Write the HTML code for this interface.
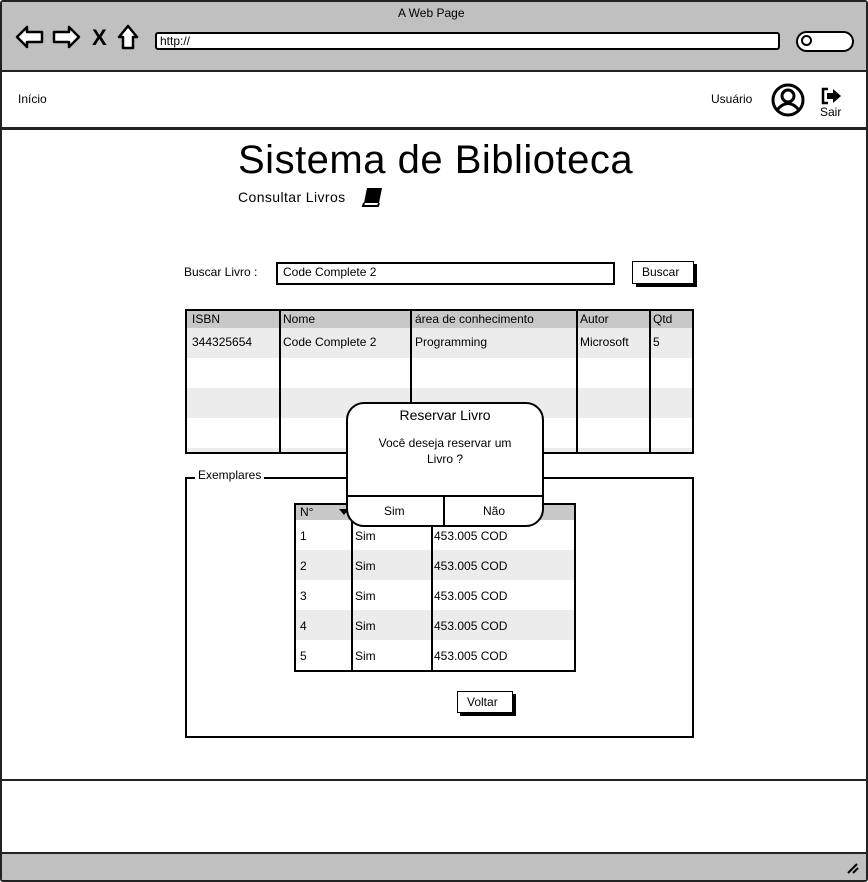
<!DOCTYPE html>
<html><head><meta charset="utf-8"><style>
*{box-sizing:border-box;margin:0;padding:0}
body{width:868px;height:882px;background:#fff;font-family:"Liberation Sans",sans-serif;font-size:13px;color:#000;position:relative;overflow:hidden}
.a{position:absolute}
.t{position:absolute;white-space:nowrap}
.row{position:absolute;left:0;right:0}
</style></head><body>
<div class="a" style="left:0;top:0;width:868px;height:882px;border:2px solid #222;border-radius:3px"></div>
<div class="a" style="left:2px;top:2px;width:864px;height:68px;background:#c0c0c0"></div>
<div class="t" style="left:398px;top:6px;font-size:12px">A Web Page</div>
<svg class="a" style="left:14px;top:22px" width="130" height="30" viewBox="0 0 130 30">
<g fill="#fff" stroke="#000" stroke-width="2.5" stroke-linejoin="round">
<path d="M3 15 L13 5 L13 10 L28 10 L28 20 L13 20 L13 25 Z"/>
<path d="M65 15 L55 5 L55 10 L40 10 L40 20 L55 20 L55 25 Z"/>
<path d="M105 15 L114 4 L123 15 L119 15 L119 26 L109 26 L109 15 Z"/>
</g>
<text x="78" y="23" font-family="Liberation Sans" font-weight="bold" font-size="22">X</text>
</svg>
<div class="a" style="left:155px;top:32px;width:625px;height:18px;background:#fff;border:2px solid #000;border-radius:3px"></div>
<div class="t" style="left:160px;top:34px;font-size:12px">http://</div>
<div class="a" style="left:796px;top:31px;width:58px;height:21px;background:#fff;border:2.5px solid #000;border-radius:11px"></div>
<div class="a" style="left:801px;top:35px;width:11px;height:11px;border:2.5px solid #000;border-radius:50%"></div>
<div class="a" style="left:0;top:70px;width:868px;height:2px;background:#222"></div>
<div class="a" style="left:0;top:127px;width:868px;height:3px;background:#222"></div>
<div class="t" style="left:18px;top:92px;font-size:12px">Início</div>
<div class="t" style="left:711px;top:92px;font-size:12px">Usuário</div>
<svg class="a" style="left:771px;top:83px" width="34" height="34" viewBox="0 0 34 34">
<circle cx="17" cy="17" r="15" fill="#fff" stroke="#000" stroke-width="3"/>
<circle cx="17" cy="13" r="6" fill="#fff" stroke="#000" stroke-width="3"/>
<path d="M6 27 Q17 14 28 27" fill="#fff" stroke="#000" stroke-width="3"/>
</svg>
<svg class="a" style="left:820px;top:86px" width="24" height="20" viewBox="0 0 24 20">
<path d="M8 3 H3 V17 H8" fill="none" stroke="#000" stroke-width="2.5"/>
<path d="M7 7 H13 V3 L21 10 L13 17 V13 H7 Z" fill="#000"/>
</svg>
<div class="t" style="left:820px;top:105px;font-size:12px">Sair</div>

<div class="t" style="left:238px;top:138px;font-size:40px;letter-spacing:0.5px">Sistema de Biblioteca</div>
<div class="t" style="left:238px;top:189px;font-size:14px;letter-spacing:0.4px">Consultar Livros</div>
<svg class="a" style="left:361px;top:186px" width="24" height="22" viewBox="0 0 24 22">
<path d="M6 2 H21 L18 17 H3 Z" fill="#000"/><path d="M3 17 L2 20 H17 L18 17" fill="#fff" stroke="#000" stroke-width="2"/>
</svg>

<div class="t" style="left:184px;top:265px;font-size:12px">Buscar Livro :</div>
<div class="a" style="left:276px;top:262px;width:339px;height:23px;border:2px solid #000;background:#fff"></div>
<div class="t" style="left:283px;top:265px;font-size:12px">Code Complete 2</div>
<div class="a" style="left:636px;top:264px;width:61px;height:23px;background:#000"></div>
<div class="a" style="left:632px;top:261px;width:62px;height:23px;border:1.5px solid #000;background:#fff"></div>
<div class="t" style="left:642px;top:265px;font-size:12px">Buscar</div>

<div class="a" style="left:185px;top:309px;width:509px;height:145px;border:2px solid #000;overflow:hidden;background:#fff">
<div class="row" style="top:0;height:17px;background:#c8c8c8"></div>
<div class="row" style="top:17px;height:30px;background:#ececec"></div>
<div class="row" style="top:77px;height:30px;background:#ececec"></div>
<div class="row" style="top:137px;height:30px;background:#ececec"></div>
<div class="a" style="left:92px;top:0;width:2px;height:145px;background:#000"></div>
<div class="a" style="left:223px;top:0;width:2px;height:145px;background:#000"></div>
<div class="a" style="left:389px;top:0;width:2px;height:145px;background:#000"></div>
<div class="a" style="left:462px;top:0;width:2px;height:145px;background:#000"></div>
<div class="t" style="left:5px;top:1px;font-size:12px">ISBN</div>
<div class="t" style="left:96px;top:1px;font-size:12px">Nome</div>
<div class="t" style="left:228px;top:1px;font-size:12px">área de conhecimento</div>
<div class="t" style="left:393px;top:1px;font-size:12px">Autor</div>
<div class="t" style="left:466px;top:1px;font-size:12px">Qtd</div>
<div class="t" style="left:5px;top:24px;font-size:12px">344325654</div>
<div class="t" style="left:96px;top:24px;font-size:12px">Code Complete 2</div>
<div class="t" style="left:228px;top:24px;font-size:12px">Programming</div>
<div class="t" style="left:393px;top:24px;font-size:12px">Microsoft</div>
<div class="t" style="left:466px;top:24px;font-size:12px">5</div>
</div>

<div class="a" style="left:185px;top:477px;width:509px;height:261px;border:2px solid #000"></div>
<div class="t" style="left:195px;top:468px;font-size:12px;background:#fff;padding:0 3px">Exemplares</div>
<div class="a" style="left:294px;top:503px;width:282px;height:169px;border:2px solid #000;overflow:hidden;background:#fff">
<div class="row" style="top:0;height:15px;background:#c8c8c8"></div>
<div class="row" style="top:45px;height:30px;background:#ececec"></div>
<div class="row" style="top:105px;height:30px;background:#ececec"></div>
<div class="a" style="left:55px;top:0;width:2px;height:169px;background:#000"></div>
<div class="a" style="left:135px;top:0;width:2px;height:169px;background:#000"></div>
<div class="t" style="left:4px;top:0;font-size:12px">N°</div>
<svg class="a" style="left:43px;top:4px" width="10" height="7"><path d="M0 0 H10 L5 6 Z" fill="#000"/></svg>
<div class="t" style="left:4px;top:24px;font-size:12px">1</div><div class="t" style="left:59px;top:24px;font-size:12px">Sim</div><div class="t" style="left:138px;top:24px;font-size:12px">453.005 COD</div>
<div class="t" style="left:4px;top:54px;font-size:12px">2</div><div class="t" style="left:59px;top:54px;font-size:12px">Sim</div><div class="t" style="left:138px;top:54px;font-size:12px">453.005 COD</div>
<div class="t" style="left:4px;top:84px;font-size:12px">3</div><div class="t" style="left:59px;top:84px;font-size:12px">Sim</div><div class="t" style="left:138px;top:84px;font-size:12px">453.005 COD</div>
<div class="t" style="left:4px;top:114px;font-size:12px">4</div><div class="t" style="left:59px;top:114px;font-size:12px">Sim</div><div class="t" style="left:138px;top:114px;font-size:12px">453.005 COD</div>
<div class="t" style="left:4px;top:144px;font-size:12px">5</div><div class="t" style="left:59px;top:144px;font-size:12px">Sim</div><div class="t" style="left:138px;top:144px;font-size:12px">453.005 COD</div>
</div>
<div class="a" style="left:460px;top:694px;width:56px;height:22px;background:#000"></div>
<div class="a" style="left:457px;top:691px;width:56px;height:22px;border:1.5px solid #000;background:#fff"></div>
<div class="t" style="left:467px;top:695px;font-size:12px">Voltar</div>

<div class="a" style="left:346px;top:402px;width:198px;height:125px;border:2px solid #000;border-radius:18px;background:#fff"></div>
<div class="t" style="left:346px;width:198px;text-align:center;top:407px;font-size:14px">Reservar Livro</div>
<div class="t" style="left:346px;width:198px;text-align:center;top:435px;font-size:12px;white-space:normal;line-height:16px;padding:0 20px">Você deseja reservar um Livro ?</div>
<div class="a" style="left:347px;top:495px;width:196px;height:1.5px;background:#000"></div>
<div class="a" style="left:443px;top:495px;width:1.5px;height:31px;background:#000"></div>
<div class="t" style="left:384px;top:504px;font-size:12px">Sim</div>
<div class="t" style="left:483px;top:504px;font-size:12px">Não</div>

<div class="a" style="left:0;top:779px;width:868px;height:2px;background:#222"></div>
<div class="a" style="left:0;top:852px;width:868px;height:2px;background:#222"></div>
<div class="a" style="left:2px;top:854px;width:864px;height:26px;background:#c0c0c0"></div>
<svg class="a" style="left:846px;top:862px" width="14" height="12"><path d="M2 11 L11 2 M7 11 L12 6" stroke="#000" stroke-width="2"/></svg>
</body></html>
